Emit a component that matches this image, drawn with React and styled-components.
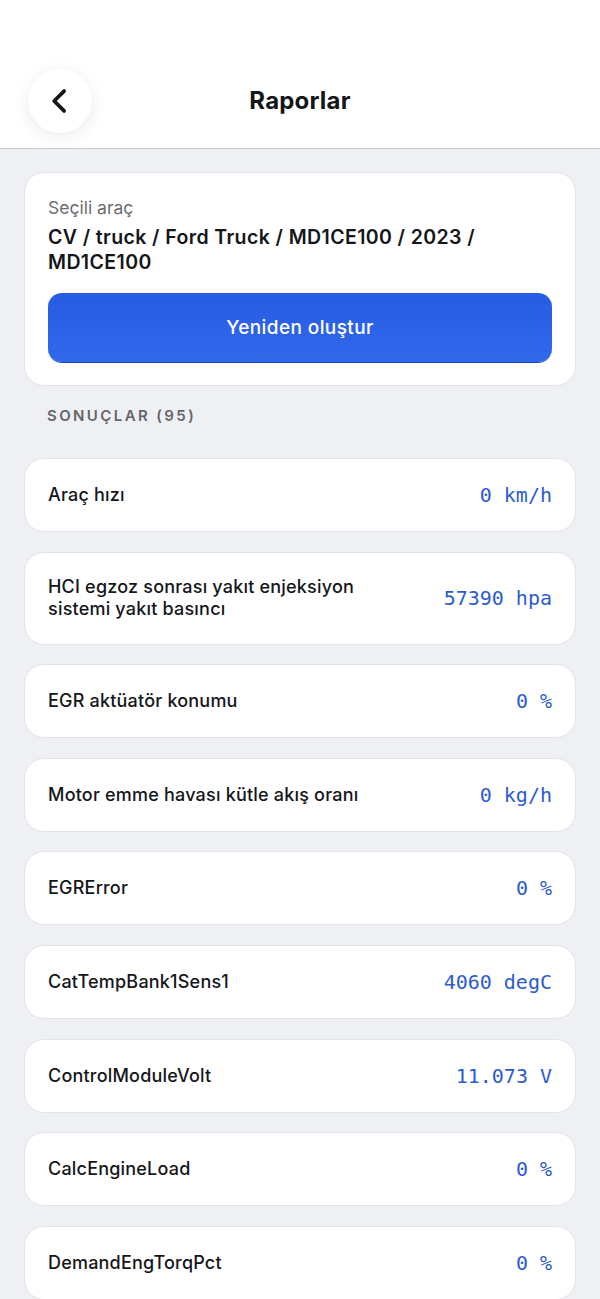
import React from 'react';
import styled, { createGlobalStyle } from 'styled-components';

const GlobalStyle = createGlobalStyle`
    html, body {
        margin: 0;
        padding: 0;
        background: #eff0f3;
        font-family: Inter, "Noto Sans", sans-serif;
        -webkit-font-smoothing: antialiased;
    }
    * {
        box-sizing: border-box;
    }
`;

const Page = styled.div`
    width: 600px;
    min-height: 1299px;
    background: #eff0f3;
    overflow: hidden;
`;

const Header = styled.header`
    height: 149px;
    background: #ffffff;
    border-bottom: 1px solid #c9cacd;
    display: grid;
    grid-template-columns: 120px 1fr 120px;
    align-items: center;
    padding-top: 53px;
`;

const BackButton = styled.button`
    width: 64px;
    height: 64px;
    margin-left: 28px;
    border: none;
    border-radius: 50%;
    background: #ffffff;
    box-shadow: 0 4px 18px rgba(0, 0, 0, 0.08);
    display: flex;
    align-items: center;
    justify-content: center;
    padding: 0;
`;

const Title = styled.h1`
    margin: 0;
    text-align: center;
    font-size: 24px;
    font-weight: 700;
    color: #14161a;
    letter-spacing: 0.2px;
`;

const Content = styled.main`
    padding: 23px 24px 0;
    display: flex;
    flex-direction: column;
`;

const Card = styled.section`
    background: #ffffff;
    border: 1px solid #e2e3e6;
    border-radius: 20px;
    padding: 23px 23px 23px;
`;

const Label = styled.div`
    font-size: 17.5px;
    color: #6b6d72;
    line-height: 23px;
`;

const Vehicle = styled.div`
    margin-top: 6px;
    font-size: 19.5px;
    font-weight: 600;
    color: #14161a;
    line-height: 25px;
    letter-spacing: 0.4px;
`;

const PrimaryButton = styled.button`
    margin-top: 18px;
    width: 100%;
    height: 69px;
    border: none;
    border-radius: 14px;
    background: linear-gradient(180deg, #285ce4 0%, #3168ea 100%);
    box-shadow: 0 1px 0 #1f4bb8;
    color: #ffffff;
    font-family: Inter, "Noto Sans", sans-serif;
    font-size: 19px;
    font-weight: 500;
    letter-spacing: 0.4px;
`;

const SectionTitle = styled.h2`
    margin: 21px 0 0 23px;
    font-size: 15px;
    font-weight: 600;
    color: #64666b;
    letter-spacing: 2.4px;
    line-height: 18px;
`;

const List = styled.div`
    margin-top: 33px;
    display: flex;
    flex-direction: column;
    gap: 19.6px;
`;

const Row = styled.div`
    min-height: ${props => (props.tall ? '93px' : '74px')};
    background: #ffffff;
    border: 1px solid #e2e3e6;
    border-radius: 20px;
    padding: 0 23px;
    display: flex;
    align-items: center;
    justify-content: space-between;
    gap: 20px;
`;

const RowName = styled.div`
    font-size: 18px;
    font-weight: 500;
    color: #14161a;
    line-height: 22px;
    letter-spacing: 0.2px;
    max-width: 340px;
`;

const RowValue = styled.div`
    font-family: "DejaVu Sans Mono", "Liberation Mono", monospace;
    font-size: 20px;
    color: #2b5ccd;
    white-space: nowrap;
`;

const results = [
    { name: 'Araç hızı', value: '0 km/h' },
    { name: 'HCI egzoz sonrası yakıt enjeksiyon sistemi yakıt basıncı', value: '57390 hpa', tall: true },
    { name: 'EGR aktüatör konumu', value: '0 %' },
    { name: 'Motor emme havası kütle akış oranı', value: '0 kg/h' },
    { name: 'EGRError', value: '0 %' },
    { name: 'CatTempBank1Sens1', value: '4060 degC' },
    { name: 'ControlModuleVolt', value: '11.073 V' },
    { name: 'CalcEngineLoad', value: '0 %' },
    { name: 'DemandEngTorqPct', value: '0 %' },
];

const App = () => (
    <>
        <GlobalStyle />
        <Page>
            <Header>
                <BackButton aria-label="Geri">
                    <svg width="28" height="28" viewBox="0 0 24 24" fill="none">
                        <path
                            d="M15.5 3.5L7 12l8.5 8.5"
                            stroke="#14161a"
                            strokeWidth="3.2"
                            strokeLinecap="round"
                            strokeLinejoin="round"
                        />
                    </svg>
                </BackButton>
                <Title>Raporlar</Title>
                <div />
            </Header>
            <Content>
                <Card>
                    <Label>Seçili araç</Label>
                    <Vehicle>CV / truck / Ford Truck / MD1CE100 / 2023 / MD1CE100</Vehicle>
                    <PrimaryButton>Yeniden oluştur</PrimaryButton>
                </Card>
                <SectionTitle>SONUÇLAR (95)</SectionTitle>
                <List>
                    {results.map(item => (
                        <Row key={item.name} tall={item.tall}>
                            <RowName>{item.name}</RowName>
                            <RowValue>{item.value}</RowValue>
                        </Row>
                    ))}
                </List>
            </Content>
        </Page>
    </>
);

export default App;
